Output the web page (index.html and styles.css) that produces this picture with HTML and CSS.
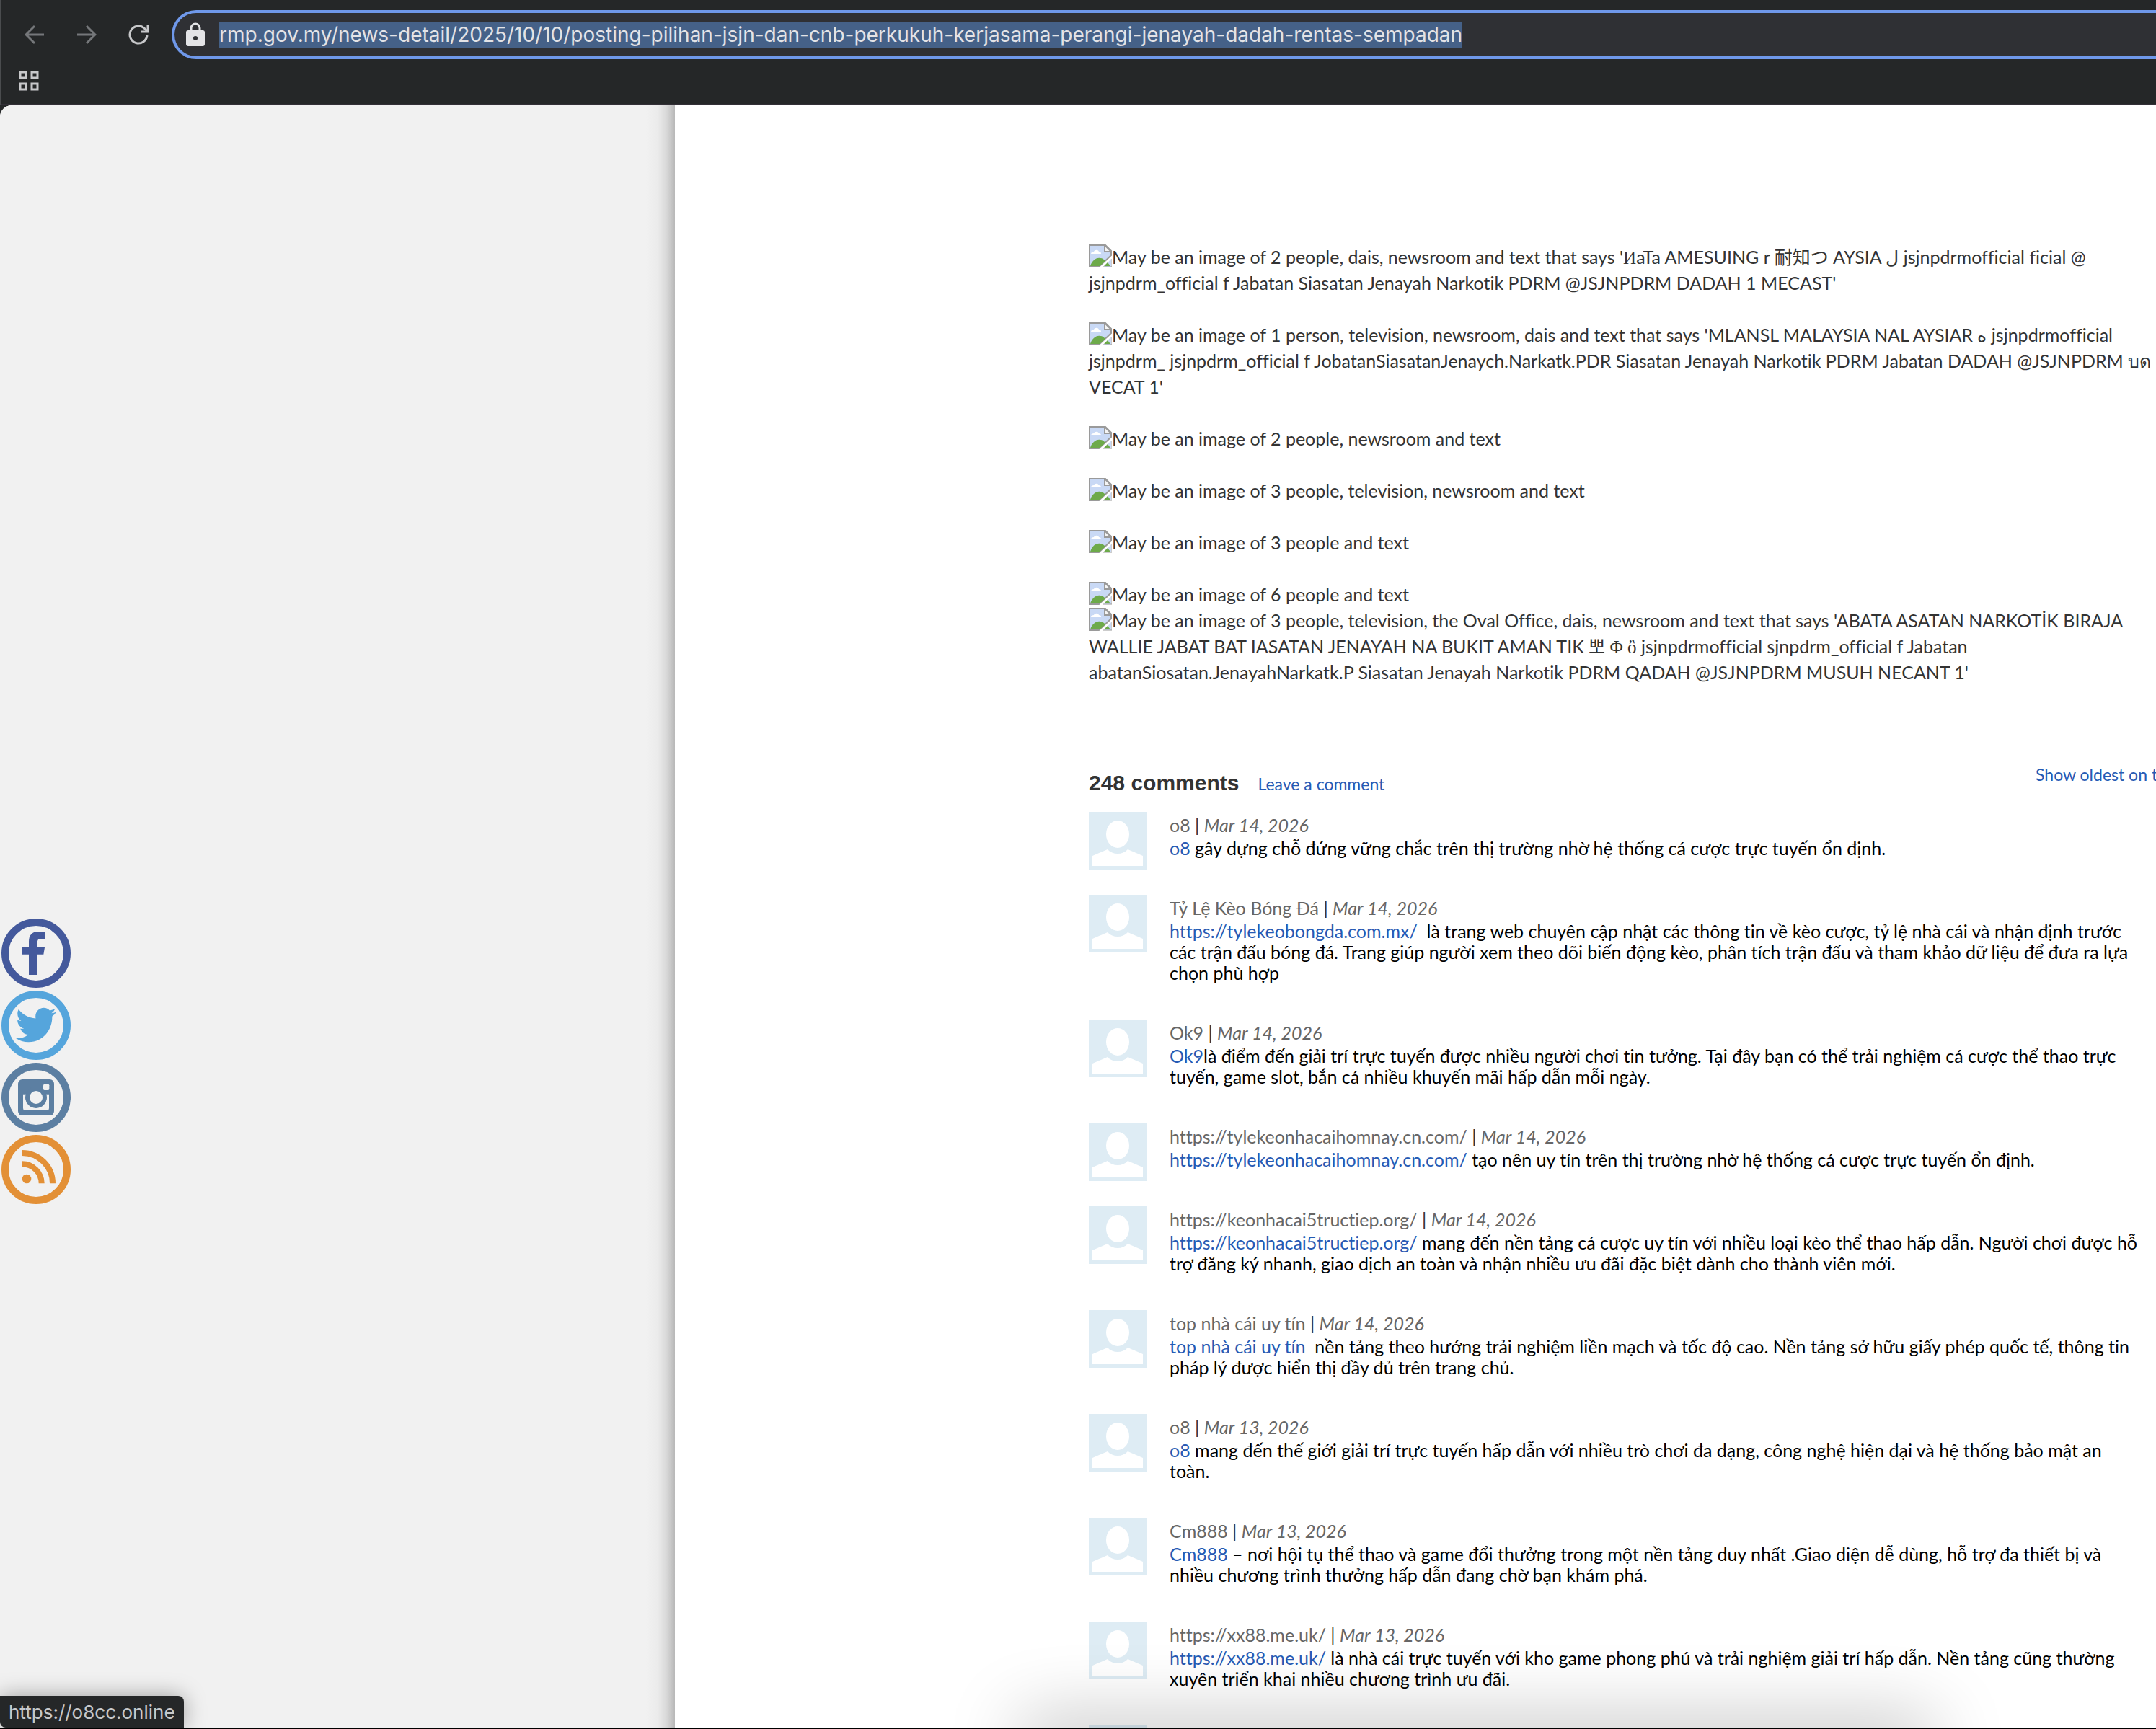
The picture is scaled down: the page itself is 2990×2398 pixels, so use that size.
FILE: index.html
```html
<!DOCTYPE html>
<html lang="en">
<head>
<meta charset="utf-8">
<meta name="viewport" content="width=device-width, initial-scale=1">
<title>JSJN dan CNB perkukuh kerjasama perangi jenayah dadah rentas sempadan</title>
<link rel="stylesheet" href="styles.css">
</head>
<body>
<svg class="defs" aria-hidden="true">
  <symbol id="broken" viewBox="0 0 32 32">
    <path d="M1 1H23L31 9V15L14 31H1Z" fill="#c9d9f5" stroke="#9a9a9a" stroke-width="2"/>
    <path d="M3 13c0-2 2-3 4-3 1-3 6-3 7 0 2 0 3 1 3 3z" fill="#fff"/>
    <path d="M2 30c3-8 8-12 14-11 3 0 5 2 7 4L15 30z" fill="#6daa4a"/>
    <path d="M22 1V10H31Z" fill="#f5f5f5" stroke="#9a9a9a" stroke-width="2"/>
    <path d="M31 20V31H21Z" fill="#c9d9f5"/>
    <path d="M26 25l4 5h-9z" fill="#6daa4a"/>
    <path d="M32 20V31H20" fill="none" stroke="#9a9a9a" stroke-width="1"/>
  </symbol>
  <symbol id="avatar" viewBox="0 0 80 80">
    <path d="M0 0H80V80H0Z" fill="#deecf4"/>
    <ellipse cx="40" cy="31" rx="16" ry="19" fill="#fff"/>
    <path d="M5 75V61L26 52C33 60 47 60 54 52L75 61V75Z" fill="#fff"/>
  </symbol>
</svg>

<header class="browser">
  <div class="toolbar">
    <div class="nav">
      <button class="tool dim" type="button" aria-label="Back"><svg viewBox="0 0 28 28"><path d="M27 14H2M14 2L2 14L14 26"/></svg></button>
      <button class="tool dim" type="button" aria-label="Forward"><svg viewBox="0 0 28 28"><path d="M1 14H26M14 2L26 14L14 26"/></svg></button>
      <button class="tool" type="button" aria-label="Reload"><svg viewBox="0 0 28 28"><path d="M26 15A12 12 0 1 1 22 5L26 9M27 1V10H18"/></svg></button>
    </div>
    <div class="omnibox">
      <svg class="lock" viewBox="0 0 26 34" aria-hidden="true"><path d="M7 13V8a6 6 0 0 1 12 0v5" fill="none" stroke="#e3e3e6" stroke-width="3"/><rect y="11" width="26" height="22" rx="3" fill="#e3e3e6"/><circle cx="13" cy="22" r="3" fill="#2f3034"/></svg>
      <input class="url" type="text" aria-label="Address" value="rmp.gov.my/news-detail/2025/10/10/posting-pilihan-jsjn-dan-cnb-perkukuh-kerjasama-perangi-jenayah-dadah-rentas-sempadan">
    </div>
  </div>
  <div class="bookmarks">
    <button class="tool" type="button" aria-label="Tab groups"><svg viewBox="0 0 28 28"><path d="M2 2H10V10H2ZM18 2H26V10H18ZM2 18H10V26H2ZM18 18H26V26H18Z"/></svg></button>
  </div>
</header>

<div class="page">
  <nav class="side" aria-label="Social media">
    <a class="social" href="#" aria-label="Facebook"><svg viewBox="0 0 288 288"><circle cx="144" cy="144" r="129" fill="none" stroke="#44599c" stroke-width="30"/><path fill="#44599c" d="M180 54v30h-16c-10 0-14 4-14 14v22h30l-5 29h-25v85h-36v-85H84v-29h30V96c0-28 14-42 40-42z"/></svg></a>
    <a class="social" href="#" aria-label="Twitter"><svg viewBox="0 0 288 288"><circle cx="144" cy="144" r="129" fill="none" stroke="#55a5dc" stroke-width="30"/><path fill="#55a5dc" transform="translate(60 55) scale(7 7.3)" d="M23.954 4.569c-.885.389-1.83.654-2.825.775 1.014-.611 1.794-1.574 2.163-2.723-.951.555-2.005.959-3.127 1.184-.896-.959-2.173-1.559-3.591-1.559-2.717 0-4.92 2.203-4.92 4.917 0 .39.045.765.127 1.124C7.691 8.094 4.066 6.13 1.64 3.161c-.427.722-.666 1.561-.666 2.475 0 1.71.87 3.213 2.188 4.096-.807-.026-1.566-.248-2.228-.616v.061c0 2.385 1.693 4.374 3.946 4.827-.413.111-.849.171-1.296.171-.314 0-.615-.03-.916-.086.631 1.953 2.445 3.377 4.604 3.417-1.68 1.319-3.809 2.105-6.102 2.105-.39 0-.779-.023-1.17-.067 2.189 1.394 4.768 2.209 7.557 2.209 9.054 0 13.999-7.496 13.999-13.986 0-.209 0-.42-.015-.63.961-.689 1.8-1.56 2.46-2.548z"/></svg></a>
    <a class="social" href="#" aria-label="Instagram"><svg viewBox="0 0 288 288"><circle cx="144" cy="144" r="129" fill="none" stroke="#5c7fa2" stroke-width="30"/><rect x="69" y="69" width="150" height="150" rx="18" fill="#5c7fa2"/><path fill="#f1f1f1" d="M90 131H198V188a10 10 0 0 1-10 10H100a10 10 0 0 1-10-10Z"/><circle cx="144" cy="144" r="36" fill="#f1f1f1" stroke="#5c7fa2" stroke-width="18"/><rect x="174" y="89" width="25" height="25" rx="5" fill="#f1f1f1"/></svg></a>
    <a class="social" href="#" aria-label="RSS"><svg viewBox="0 0 288 288"><g fill="none" stroke="#e39036"><circle cx="144" cy="144" r="129" stroke-width="30"/><path stroke-width="24" d="M86 75A127 127 0 0 1 213 202M86 121A81 81 0 0 1 167 202"/></g><circle cx="105" cy="183" r="19" fill="#e39036"/></svg></a>
  </nav>

  <main class="main">
    <article class="article">
      <p><svg class="broken" aria-hidden="true"><use href="#broken"/></svg>May be an image of 2 people, dais, newsroom and text that says '<span class="serif">И</span>aTa AMESUING r 耐知つ AYSIA <bdi>ل</bdi> jsjnpdrmofficial ficial @<br>jsjnpdrm_official f Jabatan Siasatan Jenayah Narkotik PDRM @JSJNPDRM DADAH 1 MECAST'</p>
      <p><svg class="broken" aria-hidden="true"><use href="#broken"/></svg>May be an image of 1 person, television, newsroom, dais and text that says 'MLANSL MALAYSIA NAL AYSIAR <bdi>ه</bdi> jsjnpdrmofficial<br>jsjnpdrm_ jsjnpdrm_official f JobatanSiasatanJenaych.Narkatk.PDR Siasatan Jenayah Narkotik PDRM Jabatan DADAH @JSJNPDRM บด<br>VECAT 1'</p>
      <p><svg class="broken" aria-hidden="true"><use href="#broken"/></svg>May be an image of 2 people, newsroom and text</p>
      <p><svg class="broken" aria-hidden="true"><use href="#broken"/></svg>May be an image of 3 people, television, newsroom and text</p>
      <p><svg class="broken" aria-hidden="true"><use href="#broken"/></svg>May be an image of 3 people and text</p>
      <p><svg class="broken" aria-hidden="true"><use href="#broken"/></svg>May be an image of 6 people and text<br><svg class="broken" aria-hidden="true"><use href="#broken"/></svg>May be an image of 3 people, television, the Oval Office, dais, newsroom and text that says 'ABATA ASATAN NARKOTİK BIRAJA<br>WALLIE JABAT BAT IASATAN JENAYAH NA BUKIT AMAN TIK 뽀 <span class="serif">Φ ὂ</span> jsjnpdrmofficial sjnpdrm_official f Jabatan<br>abatanSiosatan.JenayahNarkatk.P Siasatan Jenayah Narkotik PDRM QADAH @JSJNPDRM MUSUH NECANT 1'</p>
    </article>

    <section class="comments">
      <div class="comments-head">
        <h2>248 comments</h2>
        <a class="small" href="#">Leave a comment</a>
        <a class="small sort" href="#">Show oldest on top</a>
      </div>
      <ul class="list">
        <li><svg class="avatar" aria-hidden="true"><use href="#avatar"/></svg><div class="comment"><p class="by"><span>o8</span> | <em>Mar 14, 2026</em></p><p><a href="#">o8</a> gây dựng chỗ đứng vững chắc trên thị trường nhờ hệ thống cá cược trực tuyến ổn định.</p></div></li>
        <li><svg class="avatar" aria-hidden="true"><use href="#avatar"/></svg><div class="comment"><p class="by"><span>Tỷ Lệ Kèo Bóng Đá</span> | <em>Mar 14, 2026</em></p><p><a href="#">https://tylekeobongda.com.mx/</a>&nbsp; là trang web chuyên cập nhật các thông tin về kèo cược, tỷ lệ nhà cái và nhận định trước<br>các trận đấu bóng đá. Trang giúp người xem theo dõi biến động kèo, phân tích trận đấu và tham khảo dữ liệu để đưa ra lựa<br>chọn phù hợp</p></div></li>
        <li><svg class="avatar" aria-hidden="true"><use href="#avatar"/></svg><div class="comment"><p class="by"><span>Ok9</span> | <em>Mar 14, 2026</em></p><p><a href="#">Ok9</a>là điểm đến giải trí trực tuyến được nhiều người chơi tin tưởng. Tại đây bạn có thể trải nghiệm cá cược thể thao trực<br>tuyến, game slot, bắn cá nhiều khuyến mãi hấp dẫn mỗi ngày.</p></div></li>
        <li><svg class="avatar" aria-hidden="true"><use href="#avatar"/></svg><div class="comment"><p class="by"><span>https://tylekeonhacaihomnay.cn.com/</span> | <em>Mar 14, 2026</em></p><p><a href="#">https://tylekeonhacaihomnay.cn.com/</a> tạo nên uy tín trên thị trường nhờ hệ thống cá cược trực tuyến ổn định.</p></div></li>
        <li><svg class="avatar" aria-hidden="true"><use href="#avatar"/></svg><div class="comment"><p class="by"><span>https://keonhacai5tructiep.org/</span> | <em>Mar 14, 2026</em></p><p><a href="#">https://keonhacai5tructiep.org/</a> mang đến nền tảng cá cược uy tín với nhiều loại kèo thể thao hấp dẫn. Người chơi được hỗ<br>trợ đăng ký nhanh, giao dịch an toàn và nhận nhiều ưu đãi đặc biệt dành cho thành viên mới.</p></div></li>
        <li><svg class="avatar" aria-hidden="true"><use href="#avatar"/></svg><div class="comment"><p class="by"><span>top nhà cái uy tín</span> | <em>Mar 14, 2026</em></p><p><a href="#">top nhà cái uy tín</a>&nbsp; nền tảng theo hướng trải nghiệm liền mạch và tốc độ cao. Nền tảng sở hữu giấy phép quốc tế, thông tin<br>pháp lý được hiển thị đầy đủ trên trang chủ.</p></div></li>
        <li><svg class="avatar" aria-hidden="true"><use href="#avatar"/></svg><div class="comment"><p class="by"><span>o8</span> | <em>Mar 13, 2026</em></p><p><a href="#">o8</a> mang đến thế giới giải trí trực tuyến hấp dẫn với nhiều trò chơi đa dạng, công nghệ hiện đại và hệ thống bảo mật an<br>toàn.</p></div></li>
        <li><svg class="avatar" aria-hidden="true"><use href="#avatar"/></svg><div class="comment"><p class="by"><span>Cm888</span> | <em>Mar 13, 2026</em></p><p><a href="#">Cm888</a> – nơi hội tụ thể thao và game đổi thưởng trong một nền tảng duy nhất .Giao diện dễ dùng, hỗ trợ đa thiết bị và<br>nhiều chương trình thưởng hấp dẫn đang chờ bạn khám phá.</p></div></li>
        <li><svg class="avatar" aria-hidden="true"><use href="#avatar"/></svg><div class="comment"><p class="by"><span>https://xx88.me.uk/</span> | <em>Mar 13, 2026</em></p><p><a href="#">https://xx88.me.uk/</a> là nhà cái trực tuyến với kho game phong phú và trải nghiệm giải trí hấp dẫn. Nền tảng cũng thường<br>xuyên triển khai nhiều chương trình ưu đãi.</p></div></li>
        <li><svg class="avatar" aria-hidden="true"><use href="#avatar"/></svg></li>
      </ul>
    </section>
  </main>
  <div class="dock-shadow"></div>
  <div class="status">https://o8cc.online</div>
</div>
</body>
</html>
```
FILE: styles.css
```css
* { box-sizing: border-box; }
html { height: 100%; }
body {
  margin: 0;
  height: 100%;
  display: flex;
  flex-direction: column;
  overflow: hidden;
  background: #252728;
  border-bottom: 2px solid #000;
  font-family: Lato, "Noto Sans", "Noto Sans CJK JP", "Noto Sans CJK KR", sans-serif;
  font-size: 25px;
  line-height: 36px;
  font-variant-ligatures: none;
  color: #333;
}
p, h2, ul { margin: 0; padding: 0; }
a { color: #265ab4; text-decoration: none; }
.defs { position: absolute; width: 0; height: 0; }

/* Browser chrome */
.browser {
  flex: none;
  border-left: 2px solid #4a4c4e;
  border-bottom: 2px solid #332f37;
}
.toolbar { display: flex; align-items: center; padding-top: 14px; }
.nav { display: flex; gap: 44px; width: 236px; padding-left: 32px; }
.tool {
  width: 28px;
  height: 28px;
  padding: 0;
  border: 0;
  background: none;
  color: #c7c8ca;
}
.tool.dim { color: #75777a; }
.tool svg { display: block; width: 28px; height: 28px; fill: none; stroke: currentColor; stroke-width: 3; }
.omnibox {
  flex: 1;
  display: flex;
  align-items: center;
  gap: 20px;
  height: 68px;
  padding-left: 16px;
  border: 4px solid #6f98ea;
  border-right: 0;
  border-radius: 34px 0 0 34px;
  background: #2f3034;
}
.lock { width: 26px; height: 34px; }
.url {
  field-sizing: content;
  height: 36px;
  padding: 0;
  border: 0;
  background: #456188;
  color: #e3e3e6;
  font: 28px/36px Inter, sans-serif;
}
.bookmarks { display: flex; padding: 16px 24px 18px; }

/* Web page */
.page {
  position: relative;
  flex: 1;
  min-height: 0;
  display: flex;
  overflow: hidden;
  border-radius: 16px 0 0 0;
  background: #f1f1f1;
}
.side {
  flex: 0 0 936px;
  display: flex;
  flex-direction: column;
  gap: 4px;
  padding: 1128px 0 0 2px;
  background: linear-gradient(to left, #b8b8b8, #d9d9d9 12px, #ebebeb 24px, #f1f1f1 40px);
}
.social, .social svg { display: block; width: 96px; height: 96px; }
.main {
  flex: 1;
  min-width: 0;
  padding: 192px 0 0 574px;
  background: #fff;
  white-space: nowrap;
}
.article { display: flex; flex-direction: column; gap: 36px; }
.broken { width: 32px; height: 32px; vertical-align: -5px; }
.serif { font-family: "Liberation Serif", "DejaVu Serif", serif; line-height: 1; }

.comments { margin: 106px -28px 0 0; }
.comments-head { display: flex; align-items: baseline; gap: 26px; height: 70px; }
.comments-head h2 { font: bold 30px/60px "Liberation Sans", sans-serif; }
.small { font-size: 23px; }
.sort { align-self: flex-start; margin-left: auto; }
.list { list-style: none; }
.list li { display: flex; gap: 32px; }
.avatar { flex: none; width: 80px; height: 80px; }
.comment { padding-bottom: 50px; line-height: 29px; color: #000; }
.by { line-height: 36px; color: #333; }
.by span, .by em { color: #666; }

/* Overlays at the window's lower edge */
.dock-shadow {
  position: absolute;
  left: 48%;
  right: 11%;
  bottom: -30px;
  height: 20px;
  box-shadow: 0 0 100px 20px rgba(0, 0, 0, 0.28);
}
.status {
  position: absolute;
  left: 0;
  bottom: 0;
  height: 44px;
  padding: 0 12px;
  border-radius: 0 8px 0 8px;
  background: #252728;
  color: #c7c8ca;
  font: 26px/46px Inter, sans-serif;
  box-shadow: 0 0 30px rgba(0, 0, 0, 0.35);
}
```
